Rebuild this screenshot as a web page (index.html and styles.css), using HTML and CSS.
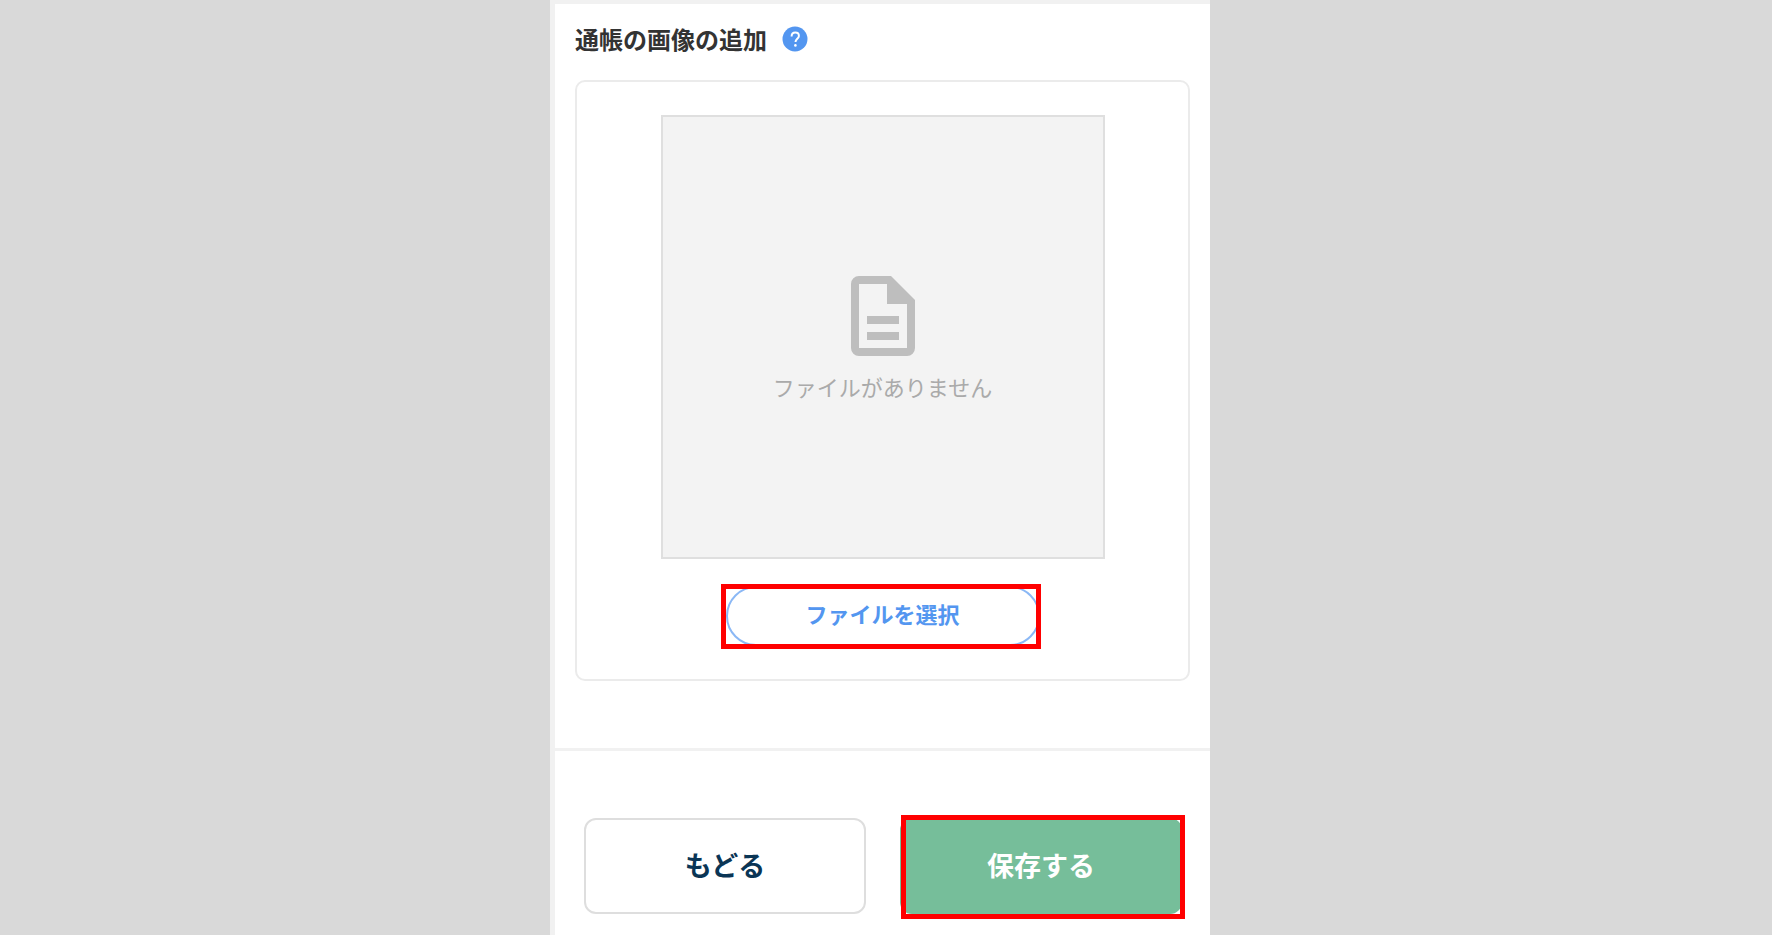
FILE: index.html
```html
<!DOCTYPE html>
<html lang="ja">
<head>
	<meta charset="utf-8">
	<title>通帳の画像の追加</title>
	<link rel="stylesheet" href="styles.css">
</head>
<body>
	<form class="panel">
		<div class="content">
			<div class="heading">
				<h1>通帳の画像の追加</h1>
				<button type="button" class="help" aria-label="ヘルプ">
					<svg width="26" height="26" viewBox="0 0 26 26">
						<circle cx="13" cy="13" r="12.5" fill="#5396f0"/>
						<path d="M9.6 10.4c0-2.4 1.6-3.8 3.7-3.8s3.6 1.3 3.6 3.3c0 2.8-3.4 3.1-3.4 6.2" fill="none" stroke="#fff" stroke-width="2"/>
						<circle cx="13.4" cy="19.4" r="1.3" fill="#fff"/>
					</svg>
				</button>
			</div>

			<div class="card">
				<div class="preview">
					<svg class="file-icon" viewBox="4 2 16 20" width="64" height="80">
						<path fill="#bebebe" fill-rule="evenodd" d="M6 2h8l6 6v12a2 2 0 0 1-2 2H6a2 2 0 0 1-2-2V4a2 2 0 0 1 2-2zM6 4v16h12V9h-5V4zM8 12h8v2H8zM8 16h8v2H8z"/>
					</svg>
					<p>ファイルがありません</p>
				</div>
				<div class="marked marked-select">
					<button type="button" class="select">ファイルを選択</button>
				</div>
			</div>
		</div>

		<div class="footer">
			<button type="button" class="btn back">もどる</button>
			<div class="marked marked-save">
				<button type="submit" class="btn save">保存する</button>
			</div>
		</div>
	</form>
</body>
</html>
```

FILE: styles.css
```css
* {
	box-sizing: border-box;
}

body {
	margin: 0;
	padding-right: 12px;
	background-color: #d9d9d9;
	font-family: "Noto Sans CJK JP", sans-serif;
}

button {
	font-family: inherit;
	font-weight: bold;
	padding: 0;
	cursor: pointer;
}

.panel {
	max-width: 660px;
	min-height: 100vh;
	margin: 0 auto;
	background-color: #fff;
	border-top: 4px solid #f1f1f1;
	border-left: 5px solid #f1f1f1;
}

.content {
	padding: 0 20px 67px;
	border-bottom: 3px solid #f1f1f1;
}

.heading {
	display: flex;
	align-items: center;
	gap: 15px;
	padding: 17px 0 23px;
}

h1 {
	margin: 0;
	font-size: 24px;
	line-height: 36px;
	color: #333;
}

.help {
	display: flex;
	border: none;
	background: none;
}

.card {
	display: flex;
	flex-direction: column;
	align-items: center;
	gap: 25px;
	padding: 33px 20px 30px;
	border: 2px solid #ebebeb;
	border-radius: 10px;
}

.preview {
	display: flex;
	flex-direction: column;
	align-items: center;
	justify-content: center;
	gap: 14px;
	width: 100%;
	max-width: 444px;
	padding-top: 4px;
	aspect-ratio: 1;
	background-color: #f3f3f3;
	border: 2px solid #dfdfdf;
}

.preview p {
	margin: 0;
	font-size: 22px;
	line-height: 32px;
	color: #aaa;
}

/* red frame over a button */
.marked {
	position: relative;
}

.marked::after {
	content: "";
	position: absolute;
	inset: 0;
	border: 5px solid #f00;
	pointer-events: none;
}

.marked-select {
	width: 100%;
	max-width: 320px;
	padding: 2px 3px 3px;
}

.marked-select::after {
	inset: 0 2px 0 -2px;
}

.select {
	display: block;
	width: 100%;
	height: 60px;
	padding-bottom: 6px;
	font-size: 22px;
	color: #5396f0;
	background-color: #fff;
	border: 2px solid #8bb8f5;
	border-radius: 30px;
}

.footer {
	display: grid;
	grid-template-columns: 1fr 1fr;
	gap: 34px;
	padding: 67px 28px 21px 29px;
}

.btn {
	display: block;
	width: 100%;
	height: 96px;
	padding-bottom: 4px;
	font-size: 27px;
	border-radius: 12px;
}

.back {
	color: #0a3555;
	background-color: #fff;
	border: 2px solid #dedede;
}

.save {
	color: #fff;
	background-color: #76be9a;
	border: none;
}

.marked-save::after {
	inset: -3px -3px -5px 1px;
}
```
